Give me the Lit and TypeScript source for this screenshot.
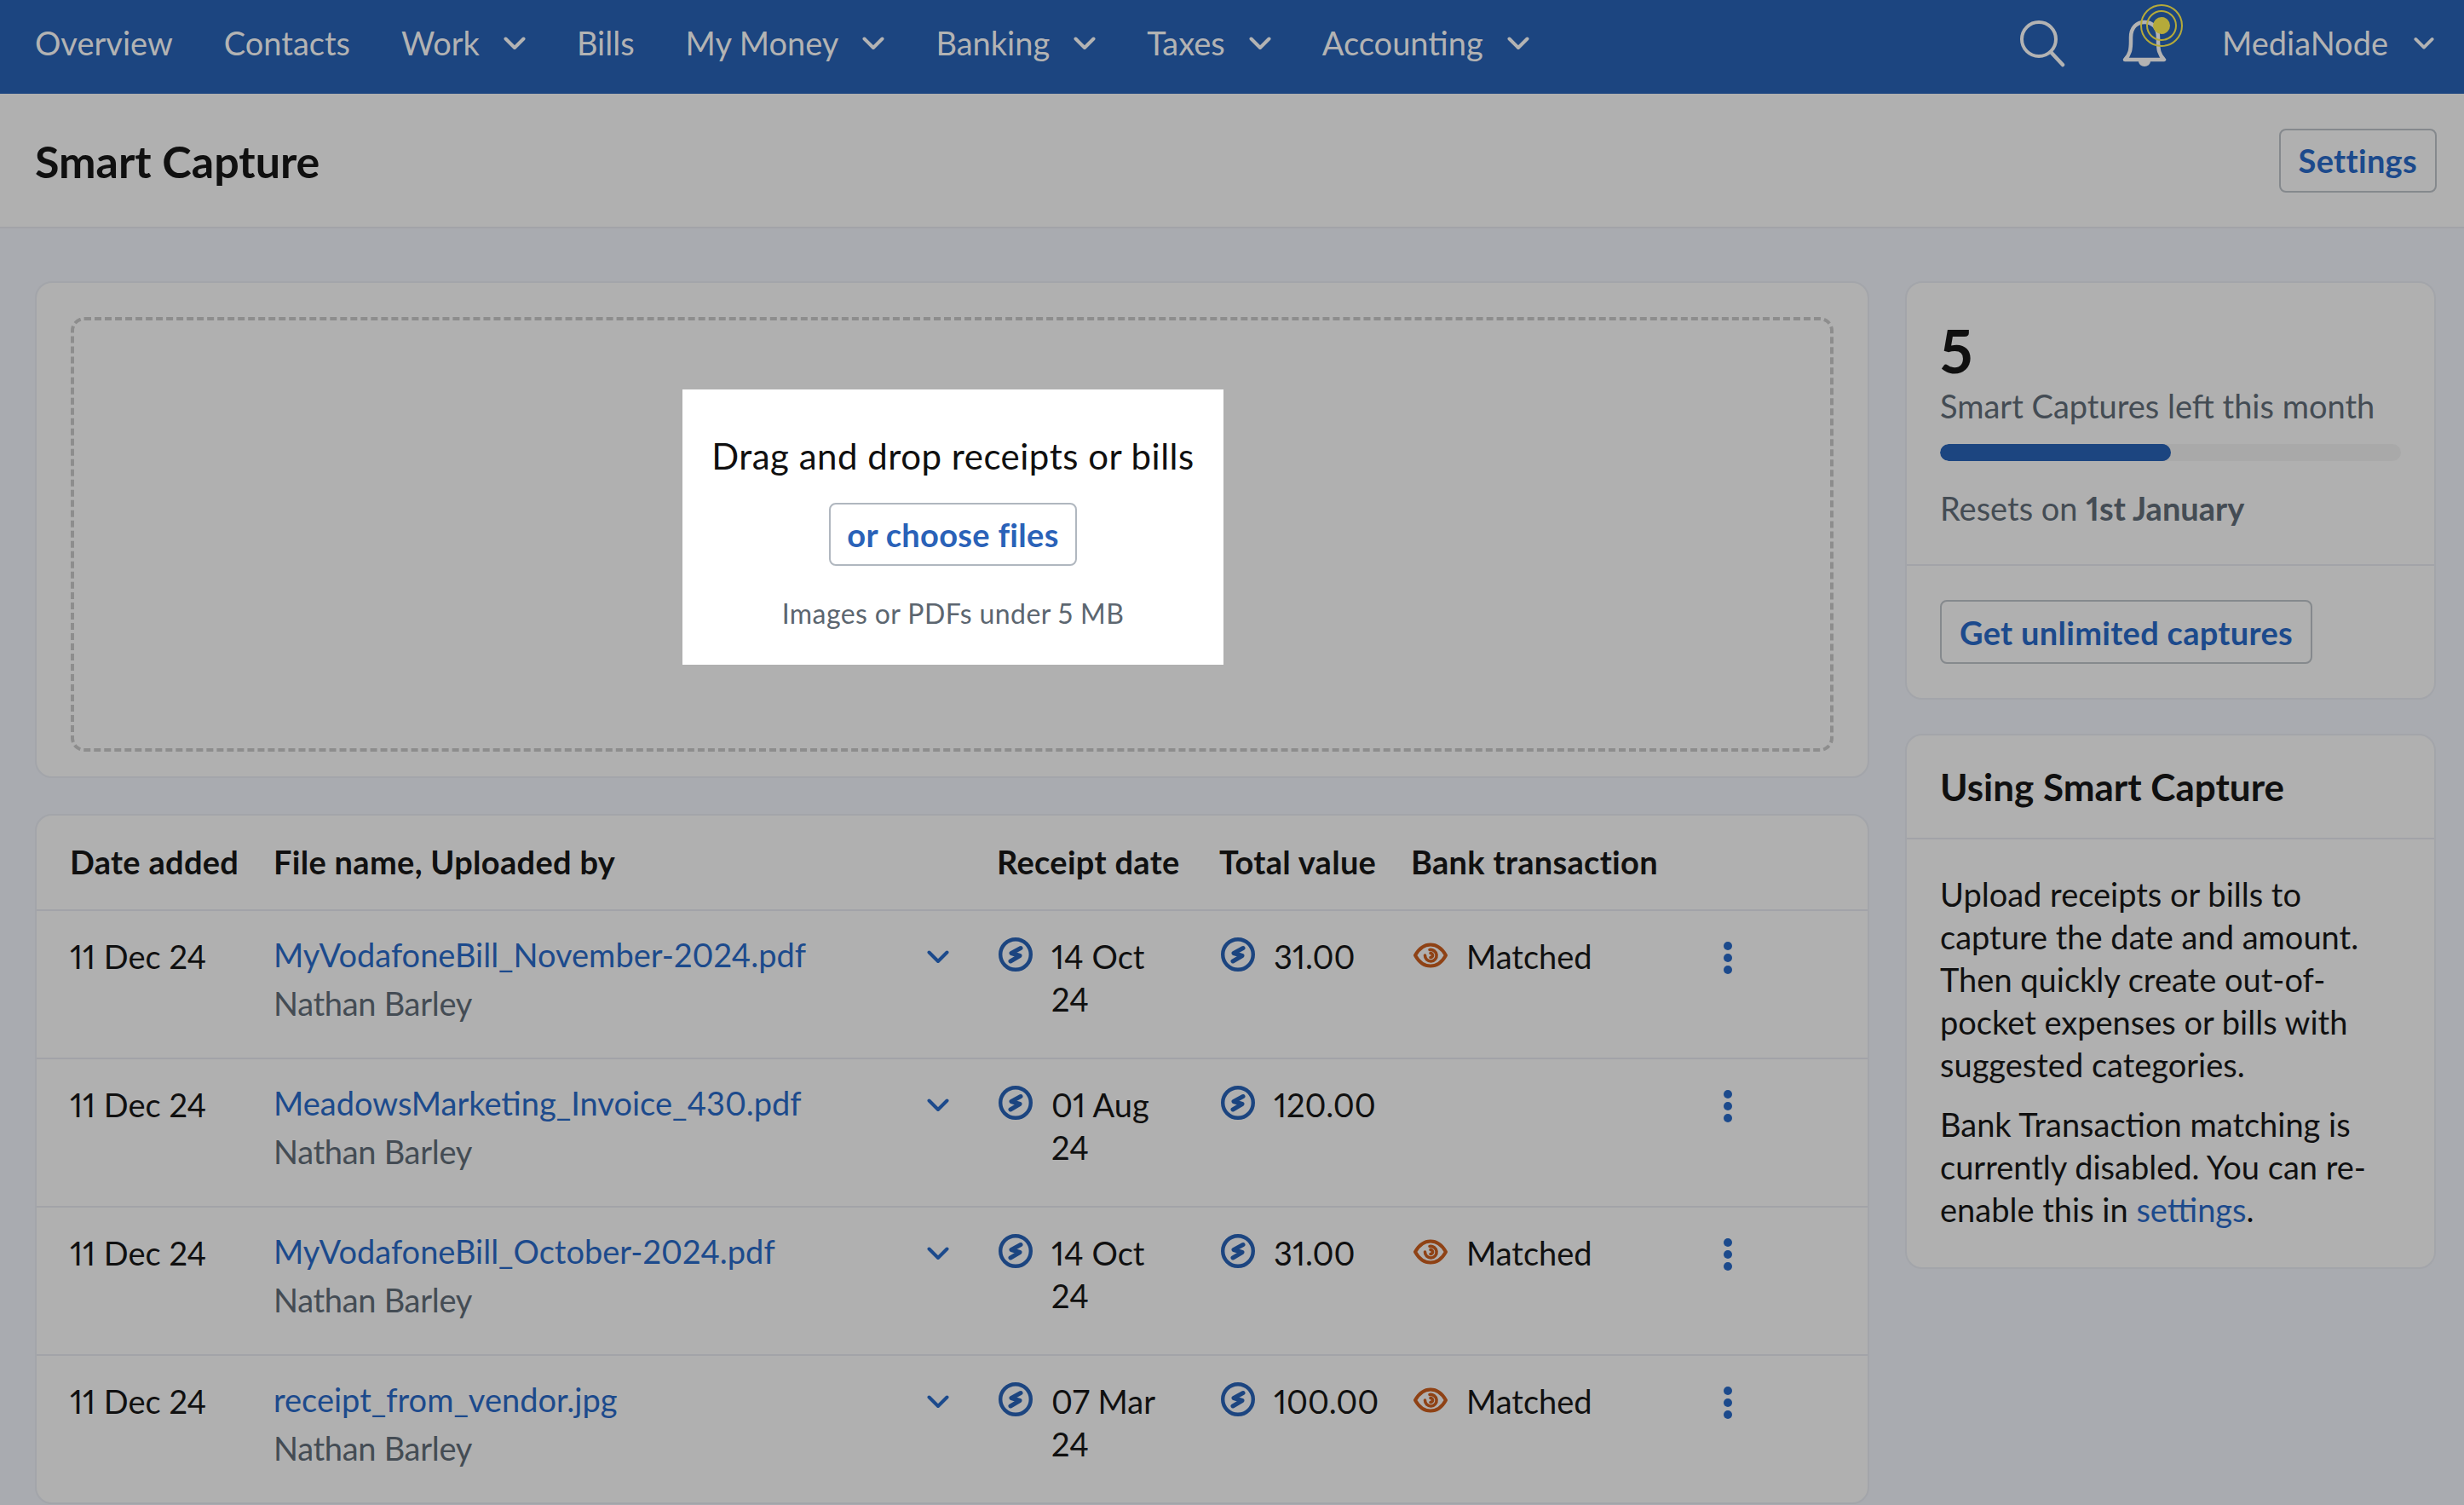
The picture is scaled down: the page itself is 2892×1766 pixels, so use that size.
import { LitElement, html, css, svg } from "lit";
import { customElement } from "lit/decorators.js";

const chev = (w = 26) => html`<svg class="chev" width=${w} height="16" viewBox="0 0 26 16"><path d="M2.5 2.5 13 13 23.5 2.5" fill="none" stroke="currentColor" stroke-width="4" stroke-linecap="round" stroke-linejoin="round"/></svg>`;
const bolt = html`<svg class="ic" width="40" height="40" viewBox="0 0 40 40"><circle cx="20" cy="20" r="17.8" fill="none" stroke="currentColor" stroke-width="4.4"/><path d="M26 12.500 15 18.500 25 21.500 14 28" fill="none" stroke="currentColor" stroke-width="5" stroke-linejoin="round" stroke-linecap="round"/></svg>`;
const eye = html`<svg class="ic" width="40" height="30" viewBox="0 0 40 30"><path d="M2 15C7 6 13 2.500 20 2.500S33 6 38 15C33 24 27 27.500 20 27.500S7 24 2 15Z" fill="none" stroke="currentColor" stroke-width="4" stroke-linejoin="round"/><path d="M19 8.500A6.800 6.800 0 1 1 13.500 15M20 12.500A2.500 2.500 0 0 1 20 17.500" fill="none" stroke="currentColor" stroke-width="3.600" stroke-linecap="round"/></svg>`;

const navItems: [string, boolean][] = [
  ["Overview", false], ["Contacts", false], ["Work", true], ["Bills", false],
  ["My Money", true], ["Banking", true], ["Taxes", true], ["Accounting", true],
];
const rows = [
  { file: "MyVodafoneBill_November-2024.pdf", d: "14 Oct 24", total: "31.00", m: true },
  { file: "MeadowsMarketing_Invoice_430.pdf", d: "01 Aug 24", total: "120.00", m: false },
  { file: "MyVodafoneBill_October-2024.pdf", d: "14 Oct 24", total: "31.00", m: true },
  { file: "receipt_from_vendor.jpg", d: "07 Mar 24", total: "100.00", m: true },
];

@customElement("app-root")
export class AppRoot extends LitElement {
  static styles = css`
    :host { display: block; width: 2892px; height: 1766px; overflow: hidden; background: #a9abb0; color: #101010;
      font-family: "Lato", "Liberation Sans", sans-serif; font-size: 38px; line-height: 50px; letter-spacing: 0; font-variant-numeric: proportional-nums; }
    * { box-sizing: border-box; }
    nav { height: 110px; background: #1c4580; color: #b3b3b3; display: flex; align-items: center; padding: 0 35px 10px 41px; }
    .nav-l { display: flex; gap: 60px; flex: 1; }
    .ni { display: flex; align-items: center; gap: 28px; }
    .chev { margin-top: 2px; }
    .tools { display: flex; align-items: center; }
    .tools .ni { gap: 30px; }
    .search { margin-right: 64px; margin-top: 2px; }
    .bell { margin-right: 42px; margin-top: -14px; }
    .hdr { height: 158px; background: #b0b0b0; border-bottom: 2px solid #a2a3a8; display: flex; align-items: center; justify-content: space-between; padding: 0 32px 0 41px; }
    h1 { margin: 2px 0 0; font-size: 52px; font-weight: 700; letter-spacing: 0; line-height: 60px; }
    .btn { display: inline-flex; align-items: center; justify-content: center; height: 75px; padding: 0 21px; border: 2px solid #85898d; border-radius: 8px; color: #1c4a8c; font-weight: 700; letter-spacing: .3px; }
    .main { display: grid; grid-template-columns: 2153px 623px; gap: 42px; padding: 62px 33px 0 41px; align-items: start; }
    .left { display: flex; flex-direction: column; gap: 42px; }
    .right { display: flex; flex-direction: column; gap: 40px; }
    .card { background: #b0b0b0; border: 2px solid #a3a5aa; border-radius: 20px; }
    .up { height: 583px; padding: 40px; }
    .dash { height: 510px; border: 4px dashed #8d8d8d; border-radius: 16px; display: flex; align-items: center; justify-content: center; padding: 0 0 17px 2px; }
    .white { width: 635px; height: 323px; background: #fff; display: flex; flex-direction: column; align-items: center; padding-top: 53px; }
    .white .t { font-size: 42px; letter-spacing: .5px; }
    .white .b { margin-top: 30px; width: 291px; height: 74px; border: 2px solid #b0b7bf; border-radius: 8px; color: #2a62b8; display: flex; align-items: center; justify-content: center; font-weight: 700; letter-spacing: .3px; }
    .white .s { margin-top: 32px; font-size: 32px; line-height: 48px; color: #5c6670; letter-spacing: .4px; }
    .table { overflow: hidden; }
    .row { display: grid; grid-template-columns: 239px 761px 88px 261px 225px 372px 40px; padding-left: 39px; height: 174px; border-top: 2px solid #a2a3a8; padding-top: 28px; }
    .row.head { height: 110px; border-top: 0; padding-top: 29px; font-weight: 700; letter-spacing: .3px; }
    .head span { white-space: nowrap; }
    .file { color: #1c4a8c; margin-top: -2px; }
    .by { color: #444c54; margin-top: 7px; letter-spacing: -.3px; }
    .chev-c { color: #1c4a8c; padding-top: 16px; padding-left: 6px; display: flex; align-items: flex-start; }
    .wi { display: flex; gap: 22px; align-items: flex-start; }
    .wi .ic { flex: none; margin-top: 3px; margin-left: 2px; color: #1c4580; }
    .wi .v { width: 130px; }
    .eye .ic { color: #8f4215; margin-top: 9px; margin-left: 3px; }
    .dots { display: flex; flex-direction: column; gap: 4px; padding-top: 8px; align-items: center; width: 10px; margin-left: -5px; }
    .dots i { width: 10px; height: 10px; background: #1c4a8c; border-radius: 50%; }
    .r1 { padding: 44px 39px 0; height: 330px; }
    .num { font-size: 70px; font-weight: 700; line-height: 70px; }
    .sub { margin-top: 5px; white-space: nowrap; }
    .muted { color: #444c54; }
    .bar { margin-top: 20px; height: 20px; border-radius: 10px; background: #a9a9a9; overflow: hidden; }
    .bar i { display: block; height: 100%; border-radius: 10px; background: #1c4580; }
    .bar + .muted { margin-top: 30px; }
    .r2 { border-top: 2px solid #a2a3a8; padding: 40px 39px 0; height: 157px; }
    .tt { padding: 30px 39px 0; height: 122px; border-bottom: 2px solid #a2a3a8; font-size: 44px; font-weight: 700; letter-spacing: 0; line-height: 60px; }
    .tb { padding: 39px 39px 43px; }
    .tb p { margin: 0 0 20px; }
    .tb p:last-child { margin: 0; }
    .tb a { color: #1c4a8c; }
  `;

  render() {
    return html`
      <nav>
        <div class="nav-l">
          ${navItems.map(([n, c]) => html`<div class="ni"><span>${n}</span>${c ? chev() : ""}</div>`)}
        </div>
        <div class="tools">
          <svg class="search" width="56" height="56" viewBox="0 0 56 56"><circle cx="23" cy="23" r="20" fill="none" stroke="currentColor" stroke-width="4"/><path d="M37 38 51 53" stroke="currentColor" stroke-width="4.500" stroke-linecap="round"/></svg>
          <svg class="bell" width="76" height="78" viewBox="0 0 76 78">
            ${svg`<path d="M4 66C10 60 11 54 11 44V40C11 28 18 22 27 22S43 28 43 40V44C43 54 44 60 50 66Z" fill="none" stroke="currentColor" stroke-width="4.500" stroke-linejoin="round"/>
            <path d="M20 68A7 6 0 0 0 34 68Z" fill="currentColor"/>
            <circle cx="47" cy="26" r="24" fill="none" stroke="#b5aa3a" stroke-width="2"/>
            <circle cx="47" cy="26" r="17" fill="none" stroke="#b5aa3a" stroke-width="2"/>
            <circle cx="47" cy="26" r="10" fill="#b5aa3a"/>`}
          </svg>
          <div class="ni"><span>MediaNode</span>${chev(24)}</div>
        </div>
      </nav>
      <div class="hdr"><h1>Smart Capture</h1><div class="btn">Settings</div></div>
      <div class="main">
        <div class="left">
          <div class="card up"><div class="dash"><div class="white">
            <div class="t">Drag and drop receipts or bills</div>
            <div class="b">or choose files</div>
            <div class="s">Images or PDFs under 5 MB</div>
          </div></div></div>
          <div class="card table">
            <div class="row head"><span>Date added</span><span>File name, Uploaded by</span><span></span><span>Receipt date</span><span>Total value</span><span>Bank transaction</span><span></span></div>
            ${rows.map((r) => html`<div class="row">
              <div>11 Dec 24</div>
              <div><div class="file">${r.file}</div><div class="by">Nathan Barley</div></div>
              <div class="chev-c">${chev()}</div>
              <div class="wi">${bolt}<div class="v">${r.d}</div></div>
              <div class="wi">${bolt}<div>${r.total}</div></div>
              <div class="wi eye">${r.m ? html`${eye}<div>Matched</div>` : ""}</div>
              <div class="dots"><i></i><i></i><i></i></div>
            </div>`)}
          </div>
        </div>
        <div class="right">
          <div class="card">
            <div class="r1">
              <div class="num">5</div>
              <div class="muted sub">Smart Captures left this month</div>
              <div class="bar"><i style="width:50%"></i></div>
              <div class="muted">Resets on <b>1st January</b></div>
            </div>
            <div class="r2"><div class="btn">Get unlimited captures</div></div>
          </div>
          <div class="card">
            <div class="tt">Using Smart Capture</div>
            <div class="tb">
              <p>Upload receipts or bills to capture the date and amount. Then quickly create out-of-pocket expenses or bills with suggested categories.</p>
              <p>Bank Transaction matching is currently disabled. You can re-enable this in <a>settings</a>.</p>
            </div>
          </div>
        </div>
      </div>
    `;
  }
}
